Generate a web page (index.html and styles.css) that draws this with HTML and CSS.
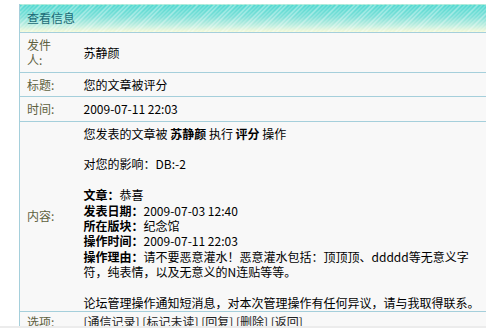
FILE: index.html
```html
<!DOCTYPE html>
<html lang="zh-CN">
<head>
    <meta charset="UTF-8">
    <meta name="viewport" content="width=device-width, initial-scale=1.0">
    <title>查看信息</title>
    <link rel="stylesheet" href="styles.css">
</head>
<body>
    <table class="msgbox">
        <colgroup>
            <col class="col-label">
            <col>
        </colgroup>
        <tr class="head">
            <td colspan="2">查看信息</td>
        </tr>
        <tr>
            <td class="label">发件人:</td>
            <td class="value">苏静颜</td>
        </tr>
        <tr>
            <td class="label">标题:</td>
            <td class="value">您的文章被评分</td>
        </tr>
        <tr>
            <td class="label">时间:</td>
            <td class="value">2009-07-11 22:03</td>
        </tr>
        <tr>
            <td class="label">内容:</td>
            <td class="value content">
                <div class="text">
                    您发表的文章被 <b>苏静颜</b> 执行 <b>评分</b> 操作<br><br>
                    对您的影响：DB:-2<br><br>
                    <b>文章：</b>恭喜<br>
                    <b>发表日期：</b>2009-07-03 12:40<br>
                    <b>所在版块：</b>纪念馆<br>
                    <b>操作时间：</b>2009-07-11 22:03<br>
                    <b>操作理由：</b>请不要恶意灌水！恶意灌水包括：顶顶顶、ddddd等无意义字符，纯表情，以及无意义的N连贴等等。<br><br>
                    论坛管理操作通知短消息，对本次管理操作有任何异议，请与我取得联系。
                </div>
            </td>
        </tr>
        <tr class="options">
            <td class="label">选项:</td>
            <td class="value">
                <a href="#">[通信记录]</a>
                <a href="#">[标记未读]</a>
                <a href="#">[回复]</a>
                <a href="#">[删除]</a>
                <a href="#">[返回]</a>
            </td>
        </tr>
    </table>
    <div class="edge"></div>
</body>
</html>
```

FILE: styles.css
```css
html, body{
    margin: 0;
    padding: 0;
    overflow: hidden;
    background: #fff;
}
body{
    padding: 3px 0 0 19px;
    font-family: "Noto Sans CJK SC", "DejaVu Sans", sans-serif;
    font-size: 12px;
    line-height: 15.4px;
    color: #000;
}

/* 메시지 테이블 */
.msgbox{
    width: 490px;
    table-layout: fixed;
    border-collapse: collapse;
    border: 1px solid #a5cfdb;
    background: #f8f8f8;
}
.col-label{
    width: 59px;
}
.msgbox td{
    border-bottom: 1px solid #a5cfdb;
    padding: 4px 0;
    vertical-align: middle;
}

/* 헤더 */
.msgbox .head td{
    height: 29px;
    padding: 0 0 0 7px;
    box-sizing: border-box;
    color: #1c6a76;
    border-top: 1px solid #fff;
    background:
        repeating-linear-gradient(135deg, rgba(255,255,255,0) 0, rgba(255,255,255,0) 2px, rgba(255,255,255,.45) 2px, rgba(255,255,255,.45) 3px),
        linear-gradient(#4fd8d0 0%, #7fe0d8 45%, #c8f0e0 80%, #fbfbd6 100%);
}

.msgbox .label{
    padding-left: 7px;
    padding-right: 17px;
    color: #5e613e;
}
.msgbox .value{
    padding-left: 5px;
}
.msgbox .content{
    padding-bottom: 0;
}
.content .text{
    width: 398px;
}

/* 선택 항목 */
.options td{
    padding-top: 2px;
}
.options a{
    color: #222;
    text-decoration: none;
}

.edge{
    position: fixed;
    left: 0;
    right: 0;
    bottom: 0;
    height: 2px;
    background: #ececec;
}
```
